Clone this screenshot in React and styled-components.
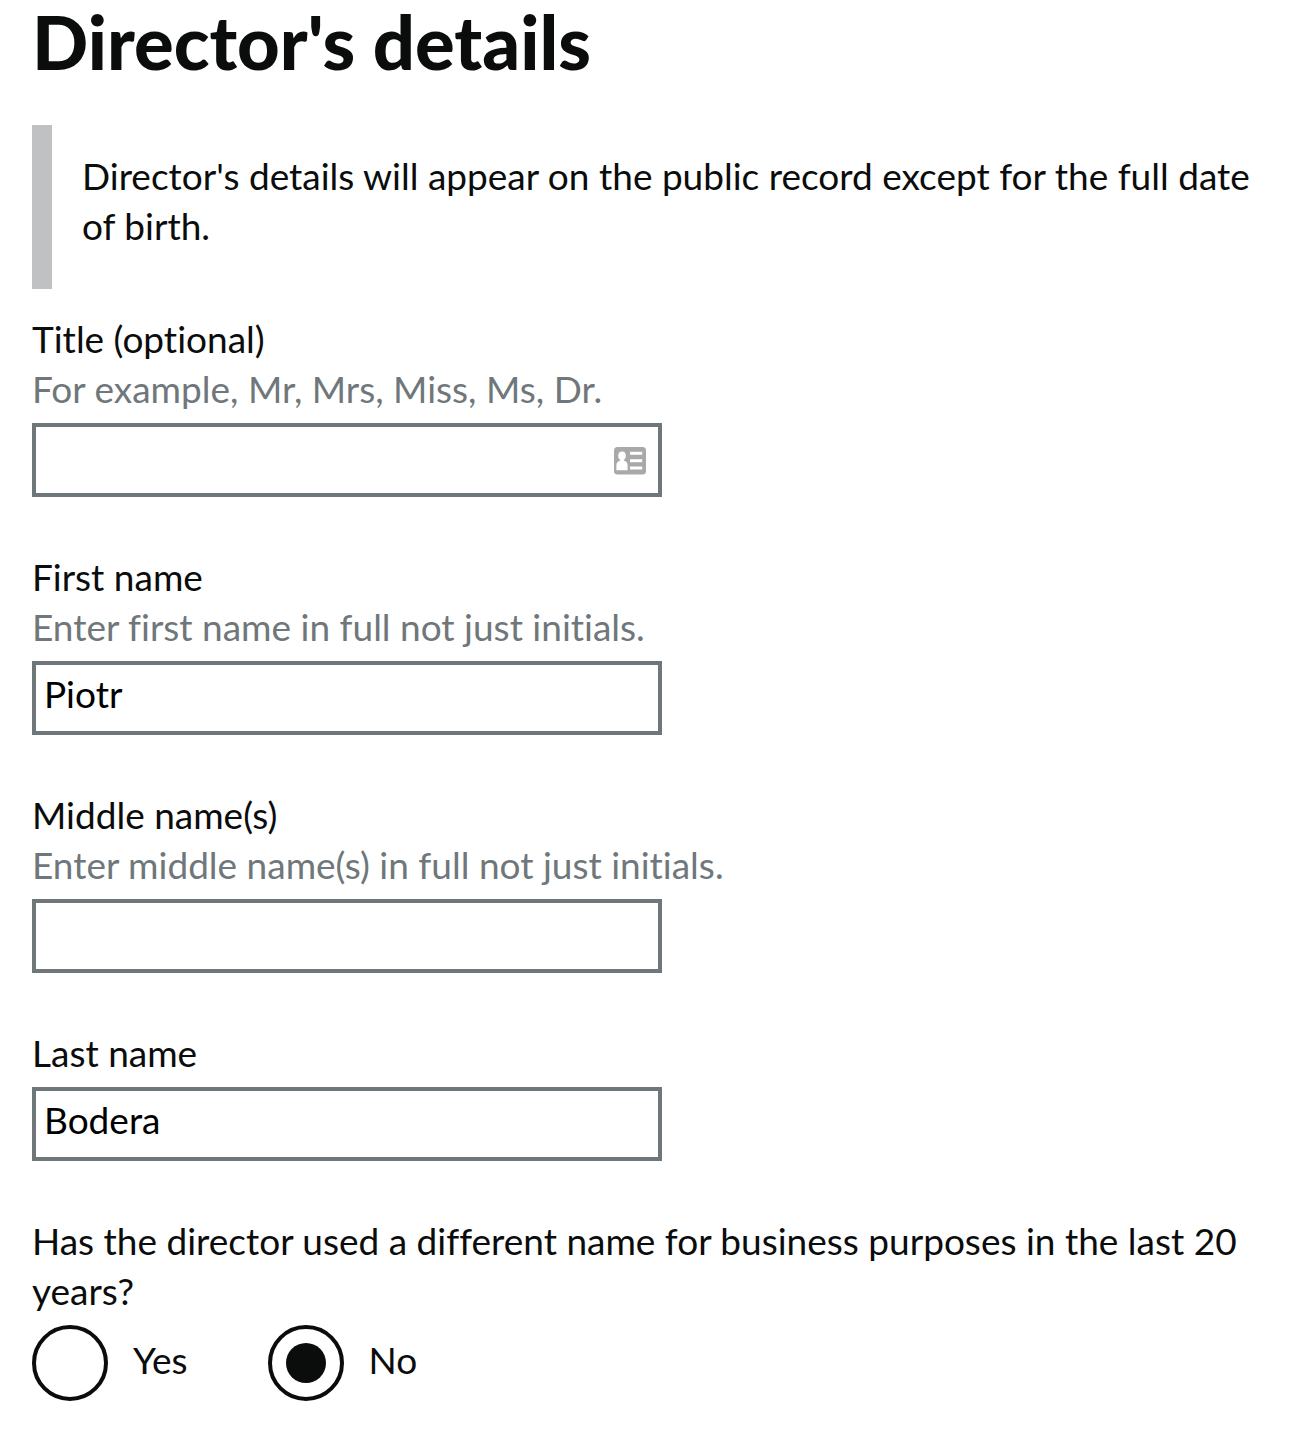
import { useState } from "react"
import styled, { createGlobalStyle } from "styled-components"

const GlobalStyle = createGlobalStyle`
  :root {
    --text: #0b0c0c;
    --secondary-text: #6f777b;
    --inset: #bfc1c3;
  }
  * {
    box-sizing: border-box;
  }
  body {
    margin: 0;
    background-color: #fff;
    color: var(--text);
    font-family: Lato, "Noto Sans", sans-serif;
    font-size: 37px;
    font-variant-ligatures: none;
    line-height: 50px;
  }
`;

const Page = styled.main`
  padding: 0 30px 44px 32px;
`;

const Heading = styled.h1`
  margin: 0;
  padding: 0 0 42px;
  font-size: 74px;
  font-weight: 900;
  line-height: 83px;
`;

const InsetText = styled.p`
  margin: 0 0 25px;
  padding: 26px 0 38px 30px;
  border-left: 20px solid var(--inset);
`;

const FormGroup = styled.div`
  margin-bottom: 55px;
`;

const Label = styled.label`
  display: block;
`;

const Hint = styled.span`
  display: block;
  color: var(--secondary-text);
`;

const InputWrapper = styled.div`
  position: relative;
  width: 100%;
  max-width: 630px;
  margin-top: 9px;
`;

const Input = styled.input`
  display: block;
  width: 100%;
  height: 74px;
  padding: 0 8px 10px;
  border: 4px solid var(--secondary-text);
  border-radius: 0;
  background-color: #fff;
  color: #000;
  font: inherit;
  outline: none;
`;

const ContactIcon = styled.svg`
  position: absolute;
  top: 24px;
  right: 16px;
  width: 32px;
  height: 28px;
  pointer-events: none;
`;

const Fieldset = styled.fieldset`
  margin: 0;
  padding: 0;
  border: none;
  min-width: 0;
`;

const Legend = styled.legend`
  padding: 0;
`;

const Radios = styled.div`
  display: flex;
  flex-wrap: wrap;
  gap: 80px;
  margin-top: 9px;
`;

const RadioItem = styled.div`
  display: flex;
  align-items: center;
`;

const RadioInput = styled.input`
  appearance: none;
  display: grid;
  place-items: center;
  width: 76px;
  height: 76px;
  margin: 0;
  border: 4px solid var(--text);
  border-radius: 50%;
  background-color: #fff;
  &:checked::before {
    content: "";
    width: 40px;
    height: 40px;
    border-radius: 50%;
    background-color: var(--text);
  }
`;

const RadioLabel = styled.label`
  padding: 0 0 6px 25px;
`;

function TextField({ id, label, hint, defaultValue, contact }) {
  return (
    <FormGroup>
      <Label htmlFor={id}>
        {label}
        {hint && <Hint>{hint}</Hint>}
      </Label>
      <InputWrapper>
        <Input id={id} name={id} type="text" defaultValue={defaultValue} />
        {contact && (
          <ContactIcon viewBox="0 0 32 28" aria-hidden="true">
            <rect x="0" y="0" width="32" height="27.5" rx="3.5" fill="#a9a9a9" />
            <g fill="#fff">
              <ellipse cx="8" cy="8.8" rx="3.8" ry="4.3" />
              <path d="M6.2 11h3.6v2.6c2.4.9 3.8 2 3.8 5v4.6H2.4v-4.6c0-3 1.4-4.1 3.8-5z" />
              <rect x="16" y="4.8" width="12.2" height="3" />
              <rect x="16" y="12.2" width="12.2" height="3" />
              <rect x="16" y="19.5" width="12.2" height="3" />
            </g>
          </ContactIcon>
        )}
      </InputWrapper>
    </FormGroup>
  )
}

const fields = [
  { id: "title", label: "Title (optional)", hint: "For example, Mr, Mrs, Miss, Ms, Dr.", contact: true },
  { id: "first-name", label: "First name", hint: "Enter first name in full not just initials.", defaultValue: "Piotr" },
  { id: "middle-names", label: "Middle name(s)", hint: "Enter middle name(s) in full not just initials." },
  { id: "last-name", label: "Last name", defaultValue: "Bodera" },
]

export default function App() {
  const [formerName, setFormerName] = useState("No")

  return (
    <>
      <GlobalStyle />
      <Page>
        <Heading>Director's details</Heading>
        <InsetText>
          Director's details will appear on the public record except for the full date of birth.
        </InsetText>
        <form>
          {fields.map((field) => (
            <TextField key={field.id} {...field} />
          ))}
          <Fieldset>
            <Legend>
              Has the director used a different name for business purposes in the last 20 years?
            </Legend>
            <Radios>
              {["Yes", "No"].map((option) => (
                <RadioItem key={option}>
                  <RadioInput
                    type="radio"
                    id={`former-name-${option}`}
                    name="former-name"
                    checked={formerName === option}
                    onChange={() => setFormerName(option)}
                  />
                  <RadioLabel htmlFor={`former-name-${option}`}>{option}</RadioLabel>
                </RadioItem>
              ))}
            </Radios>
          </Fieldset>
        </form>
      </Page>
    </>
  )
}
